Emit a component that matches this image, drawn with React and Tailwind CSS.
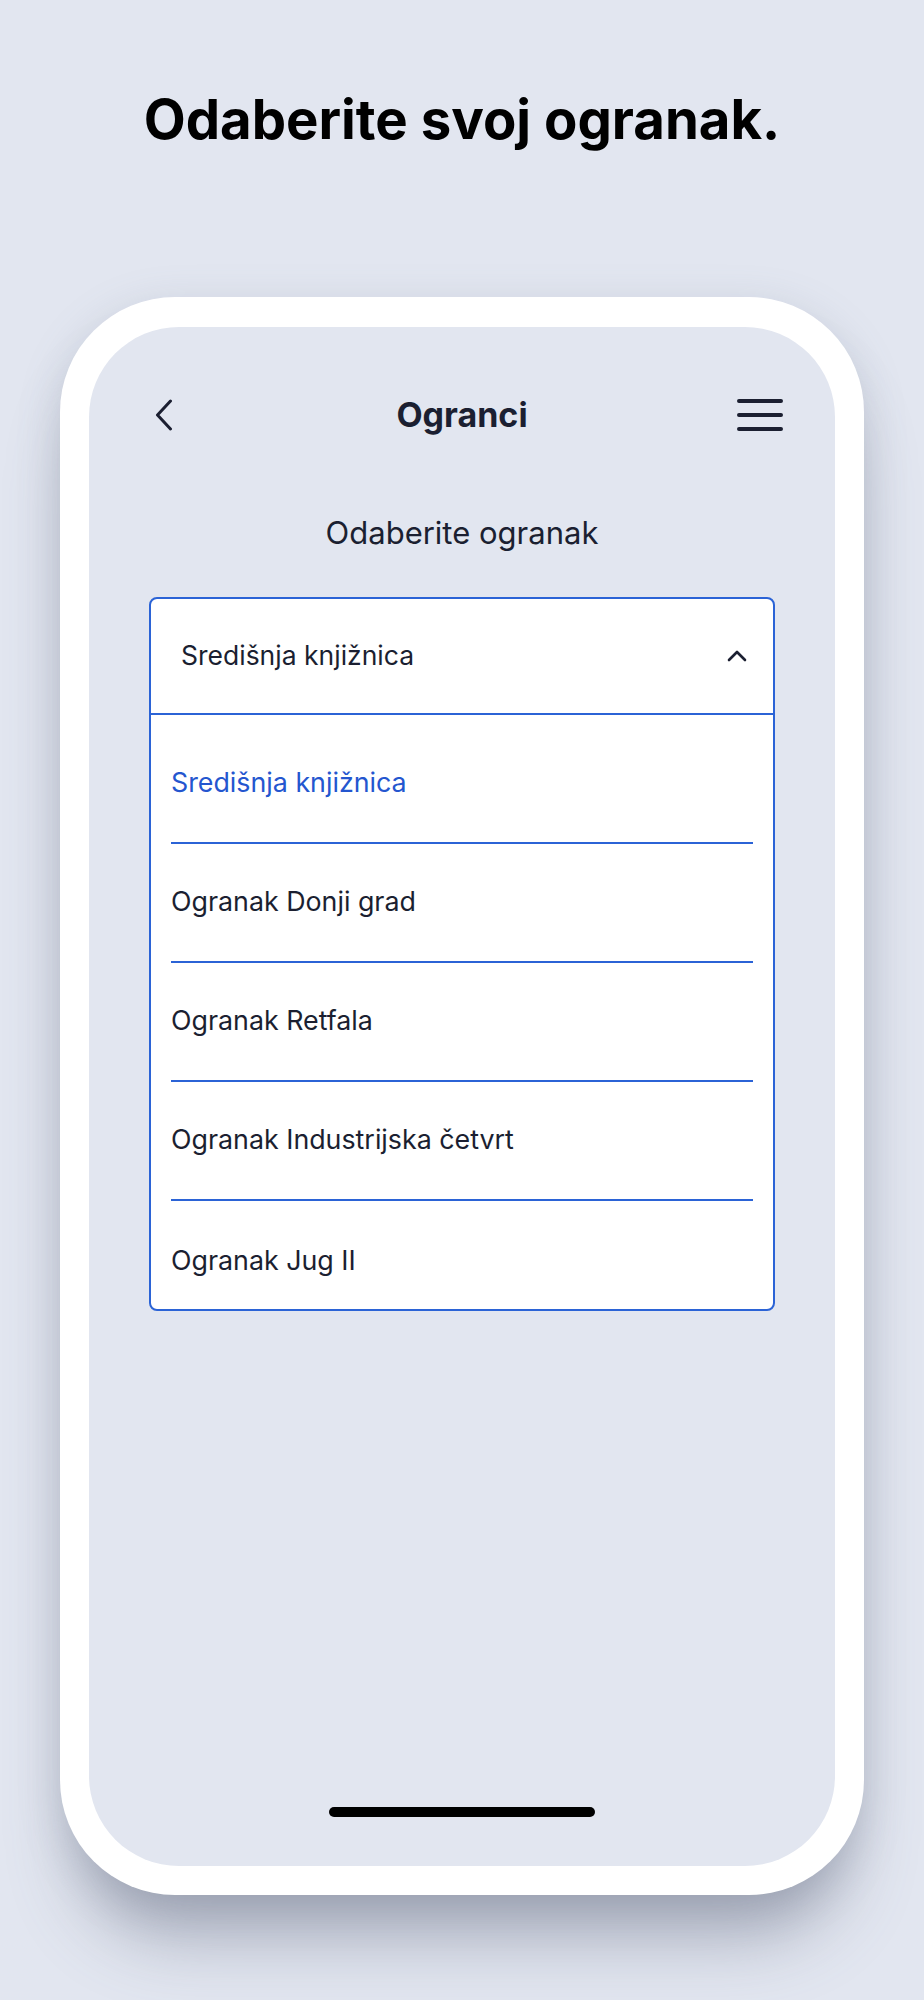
import React from "react";

const branches = [
  "Središnja knjižnica",
  "Ogranak Donji grad",
  "Ogranak Retfala",
  "Ogranak Industrijska četvrt",
  "Ogranak Jug II",
];

const BackIcon = () => (
  <svg width="18" height="32" viewBox="0 0 18 32" fill="none">
    <path
      d="M15.5 2 L2.5 16 L15.5 30"
      stroke="#1b1f31"
      strokeWidth="3"
      strokeLinecap="round"
      strokeLinejoin="round"
    />
  </svg>
);

const MenuIcon = () => (
  <svg width="46" height="32" viewBox="0 0 46 32" fill="none">
    <path
      d="M2 2 H44 M2 16 H44 M2 30 H44"
      stroke="#1b1f31"
      strokeWidth="4"
      strokeLinecap="round"
    />
  </svg>
);

const ChevronUp = () => (
  <svg width="20" height="12" viewBox="0 0 20 12" fill="none">
    <path
      d="M2 10 L10 2 L18 10"
      stroke="#1b1f31"
      strokeWidth="2.6"
      strokeLinecap="round"
      strokeLinejoin="round"
    />
  </svg>
);

const App = () => {
  const selected = branches[0];

  return (
    <div className="min-h-[2000px] bg-[#e2e6f0] font-['Inter',sans-serif] text-[#1b1f31] overflow-hidden">
      <h1 className="pt-[88px] text-center text-[54.5px] leading-[62px] font-bold text-black">
        Odaberite svoj ogranak.
      </h1>

      {/* phone */}
      <div className="mx-auto mt-[147px] w-[804px] h-[1598px] bg-white rounded-[115px] pt-[30px] pb-[29px] px-[29px] shadow-[0_60px_70px_-20px_rgba(90,98,120,0.45),0_10px_40px_rgba(120,130,150,0.25)]">
        <div className="h-full bg-[#e2e6f0] rounded-[90px] flex flex-col">
          <div className="grid grid-cols-[1fr_auto_1fr] items-center h-[48px] mt-[64px] px-[52px]">
            <div className="justify-self-start pl-[14px]">
              <BackIcon />
            </div>
            <p className="text-[34px] font-bold leading-none">Ogranci</p>
            <div className="justify-self-end">
              <MenuIcon />
            </div>
          </div>

          <p className="mt-[77px] text-center text-[31px] leading-[34px]">
            Odaberite ogranak
          </p>

          <div className="mt-[47px] mx-[60px] bg-white border-2 border-[#2b63d6] rounded-[8px]">
            <div className="h-[116px] flex items-center justify-between pl-[30px] pr-[26px] border-b-2 border-[#2b63d6]">
              <span className="text-[26.5px]">{selected}</span>
              <ChevronUp />
            </div>
            <ul className="pt-[10px] px-[20px]">
              {branches.map((b, i) => (
                <li
                  key={b}
                  className={
                    i === branches.length - 1
                      ? "h-[108px] pt-[10px] flex items-center"
                      : "h-[119px] pb-[2px] flex items-center border-b-2 border-[#2b63d6]"
                  }
                >
                  <span
                    className={
                      b === selected
                        ? "text-[26.8px] text-[#2456cf]"
                        : "text-[26.8px]"
                    }
                  >
                    {b}
                  </span>
                </li>
              ))}
            </ul>
          </div>

          <div className="mt-auto mb-[49px] mx-auto w-[266px] h-[10px] bg-black rounded-full" />
        </div>
      </div>
    </div>
  );
};

export default App;
